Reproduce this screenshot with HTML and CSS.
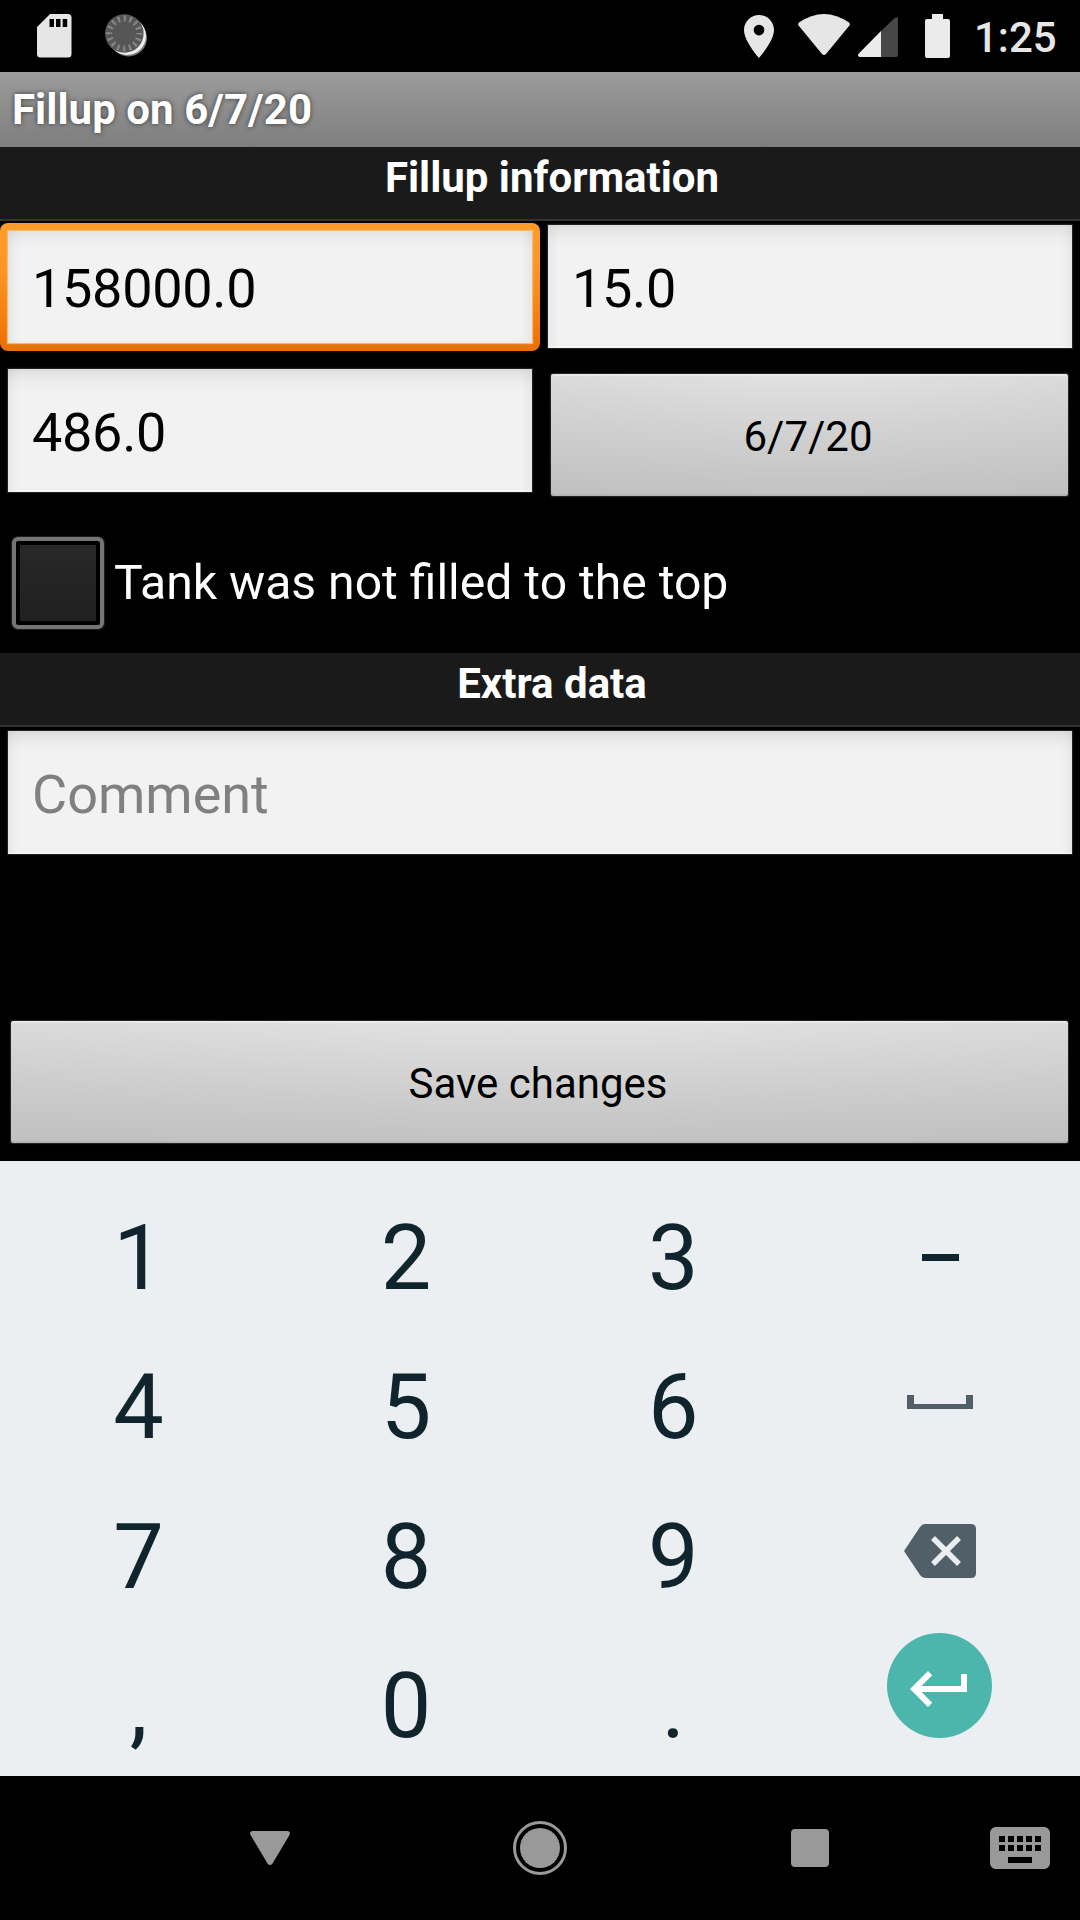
FILE: index.html
```html
<!DOCTYPE html>
<html lang="en">
<head>
<meta charset="utf-8">
<title>Fillup on 6/7/20</title>
<link rel="stylesheet" href="styles.css">
</head>
<body>
<div class="screen">
  <header class="status">
    <svg class="sd" width="35" height="44" viewBox="0 0 35 44"><path fill="#e6e6e6" fill-rule="evenodd" d="M13 0H31Q34.500 0 34.500 3.500V40Q34.500 43.500 31 43.500H3.500Q0 43.500 0 40V13ZM12.500 5V13H17V5ZM19 5V13H23.500V5ZM25.700 5V13H30.200V5Z"/></svg>
    <svg class="spinner" width="43" height="43" viewBox="0 0 43 43"><circle cx="23.500" cy="24" r="18.500" fill="#777"/><circle cx="22" cy="22" r="19" fill="#ededed"/><circle cx="19.300" cy="19.500" r="19.300" fill="#565656"/><circle cx="19.300" cy="19.500" r="15" fill="none" stroke="#858585" stroke-width="6" stroke-dasharray="2.200 3.690" stroke-dashoffset="1.100"/></svg>
    <div class="status-right">
      <svg class="pin" width="30" height="43" viewBox="5 2 14 20" preserveAspectRatio="none"><path fill="#e6e6e6" d="M12 2C8.130 2 5 5.130 5 9c0 5.250 7 13 7 13s7-7.750 7-13c0-3.870-3.130-7-7-7zm0 9.500a2.500 2.500 0 1 1 0-5 2.500 2.500 0 0 1 0 5z"/></svg>
      <svg class="wifi" width="52" height="42" viewBox="0 0 52 42"><path fill="#e6e6e6" d="M1 8.500Q26-8.500 51 8.500Q52.500 10 51 12L28 40Q26 42 24 40L1 12Q-.5 10 1 8.500Z"/></svg>
      <svg class="signal" width="40" height="40" viewBox="0 0 40 40"><path fill="#474747" d="M23 14L37 .8Q40-1 40 2V38Q40 40 38 40H23Z"/><path fill="#ebebeb" d="M23 14V40H1.500Q-1 39 .8 36.500Z"/></svg>
      <svg class="battery" width="25" height="44" viewBox="0 0 25 44"><path fill="#ebebeb" d="M7 0H18V5H23Q25 5 25 7V42Q25 44 23 44H2Q0 44 0 42V7Q0 5 2 5H7Z"/></svg>
      <span class="clock">1:25</span>
    </div>
  </header>
  <h1 class="title">Fillup on 6/7/20</h1>
  <main class="form">
    <h2 class="section">Fillup information</h2>
    <div class="row">
      <div class="focus"><div class="field number focused">158000.0</div></div>
      <div class="field number right">15.0</div>
    </div>
    <div class="row second">
      <div class="field number">486.0</div>
      <div class="button date">6/7/20</div>
    </div>
    <div class="check-row"><span class="checkbox"><span class="check-fill"></span></span><span class="check-label">Tank was not filled to the top</span></div>
    <h2 class="section">Extra data</h2>
    <div class="field comment">Comment</div>
    <div class="button save">Save changes</div>
  </main>
  <section class="keyboard">
    <span class="key">1</span><span class="key">2</span><span class="key">3</span><span class="key"><span class="minus"></span></span>
    <span class="key">4</span><span class="key">5</span><span class="key">6</span>
    <span class="key icon"><svg class="space" width="66" height="14" viewBox="0 0 66 14"><path fill="#505f68" d="M0 0H7V9H59V0H66V14H0Z"/></svg></span>
    <span class="key">7</span><span class="key">8</span><span class="key">9</span>
    <span class="key icon"><svg class="backspace" width="72" height="54" viewBox="0 0 72 54"><path fill="#505f68" d="M21 0H67Q72 0 72 5V49Q72 54 67 54H21Q18 54 16 51L0 27 16 3Q18 0 21 0Z"/><path stroke="#ebeef1" stroke-width="5.500" d="M29 14L55 40M55 14L29 40"/></svg></span>
    <span class="key">,</span><span class="key">0</span><span class="key">.</span>
    <span class="key icon"><span class="enter"><svg width="72" height="72" viewBox="0 0 24 24"><path fill="#fff" d="M19 7v4H5.830l3.580-3.590L8 6l-6 6 6 6 1.410-1.410L5.830 13H21V7z"/></svg></span></span>
  </section>
  <nav class="nav">
    <svg class="back" width="40" height="34" viewBox="0 0 40 34"><path fill="#999" d="M3 0H37Q41 0 39.500 4L22.500 32.500Q20 35.500 17.500 32.500L.5 4Q-1 0 3 0Z"/></svg>
    <svg class="home" width="54" height="54" viewBox="0 0 54 54"><circle cx="27" cy="27" r="20" fill="#999"/><circle cx="27" cy="27" r="25.500" fill="none" stroke="#999" stroke-width="3"/></svg>
    <span class="recent"></span>
    <svg class="ime" width="60" height="42" viewBox="2 5 20 14"><path fill="#999" d="M20 5H4c-1.100 0-1.990.9-1.990 2L2 17c0 1.100.9 2 2 2h16c1.100 0 2-.9 2-2V7c0-1.100-.9-2-2-2zm-9 3h2v2h-2V8zm0 3h2v2h-2v-2zM8 8h2v2H8V8zm0 3h2v2H8v-2zm-1 2H5v-2h2v2zm0-3H5V8h2v2zm9 7H8v-2h8v2zm0-4h-2v-2h2v2zm0-3h-2V8h2v2zm3 3h-2v-2h2v2zm0-3h-2V8h2v2z"/></svg>
  </nav>
</div>
</body>
</html>
```

FILE: styles.css
```css
* { box-sizing: border-box; }
body { margin: 0; background: #000; font-family: Roboto, sans-serif; }
svg { display: block; flex: none; }
.screen { width: 1080px; height: 1920px; display: flex; flex-direction: column; background: #000; overflow: hidden; }

.status { height: 72px; flex: none; display: flex; align-items: flex-start; padding: 14px 25px 0 37px; }
.spinner { margin-left: 33px; }
.status-right { display: flex; align-items: flex-start; margin-left: auto; }
.pin { margin-top: 1px; }
.wifi { margin-left: 24px; }
.signal { margin: 3px 0 0 8px; }
.battery { margin-left: 27px; }
.clock { margin-left: 24px; width: 81px; font-size: 42px; font-weight: 500; line-height: 47px; color: #e6e6e6; white-space: nowrap; }

.title { margin: 0; height: 75px; flex: none; padding-left: 12px; font-size: 42px; font-weight: 700; line-height: 75px; letter-spacing: .05px; color: #fff; text-shadow: 0 0 5px rgba(0,0,0,.6); background: linear-gradient(#9c9c9c, #7e7e7e); }

.form { height: 1014px; flex: none; display: flex; flex-direction: column; }
.section { margin: 0; height: 74px; flex: none; padding-left: 24px; font-size: 42px; font-weight: 700; line-height: 61px; text-align: center; color: #fff; background: #1a1a1a; border-bottom: 2px solid #333; }
.row { display: flex; align-items: flex-start; flex: none; padding-top: 2px; height: 145px; }
.field { width: 524px; height: 123px; padding-left: 24px; font-size: 54px; line-height: 127px; color: #000; background: linear-gradient(#dfdfdf, #ededed 13px, #f2f2f2 24px); box-shadow: inset 8px 0 12px -6px rgba(0,0,0,.07), inset -8px 0 12px -6px rgba(0,0,0,.07), inset 0 -2px #fafafa, 0 0 1px 1px rgba(255,255,255,.13); }
.number { letter-spacing: -.3px; }
.focus { width: 540px; height: 128px; padding: 8px; border-radius: 8px; background: linear-gradient(#ff9c28, #fb9424 40%, #f17606 88%, #e87004); }
.focused { height: 112px; line-height: 115px; background: linear-gradient(#e6e6e6, #efefef 13px, #f2f2f2 20px); box-shadow: inset 8px 0 12px -6px rgba(0,0,0,.08), inset -8px 0 12px -6px rgba(0,0,0,.08), 0 0 1px 1px #f5b773; }
.right { margin: 2px 0 0 8px; }
.second { padding: 3px 12px 0 8px; height: 136px; justify-content: space-between; }
.button { padding-right: 3px; font-size: 42px; text-align: center; color: #000; border-radius: 2px; background: linear-gradient(90deg, rgba(180,180,180,.14), transparent 40%, transparent 60%, rgba(180,180,180,.14)), linear-gradient(#e1e1e1, #c6c6c6 85%, #c2c2c2); box-shadow: inset 0 2px rgba(255,255,255,.35), inset 0 -2px rgba(0,0,0,.06), 0 0 1px 1px rgba(255,255,255,.16); }
.date { width: 517px; height: 122px; margin-top: 5px; line-height: 126px; }
.check-row { height: 151px; flex: none; display: flex; align-items: flex-start; padding: 35px 0 0 12px; }
.checkbox { width: 92px; height: 92px; padding: 4px; border: 4px solid #757575; border-radius: 6px; box-shadow: 0 0 1px 1px rgba(128,128,128,.25); }
.check-fill { display: block; width: 76px; height: 76px; background: linear-gradient(#282828, #202020); }
.check-label { margin-left: 10px; font-size: 48.100px; line-height: 92px; color: #fff; }
.comment { width: 1064px; flex: none; margin: 4px 8px 0; color: #808080; }
.save { width: 1057px; height: 122px; flex: none; margin: 167px 0 0 11px; line-height: 126px; }

.keyboard { height: 615px; flex: none; display: grid; grid-template: repeat(4, 149.300px) / repeat(4, 267.300px); padding: 22px 5px 0; background: #ebeff2; }
.key { display: flex; justify-content: center; font-size: 90px; line-height: 152px; color: #0f242d; }
.icon { padding-right: 1.500px; }
.minus { width: 37px; height: 7px; margin-top: 70.500px; background: #0f242d; }
.space { margin-top: 63px; }
.backspace { margin-top: 42px; }
.enter { width: 105px; height: 105px; margin-top: 2.500px; border-radius: 50%; background: #4db6ac; display: flex; justify-content: center; padding-top: 20px; }

.nav { height: 144px; flex: none; display: flex; align-items: center; padding-left: 250px; }
.home { margin-left: 223px; }
.recent { width: 38px; height: 38px; margin-left: 224px; border-radius: 4px; background: #999; }
.ime { margin-left: 161px; }
```
